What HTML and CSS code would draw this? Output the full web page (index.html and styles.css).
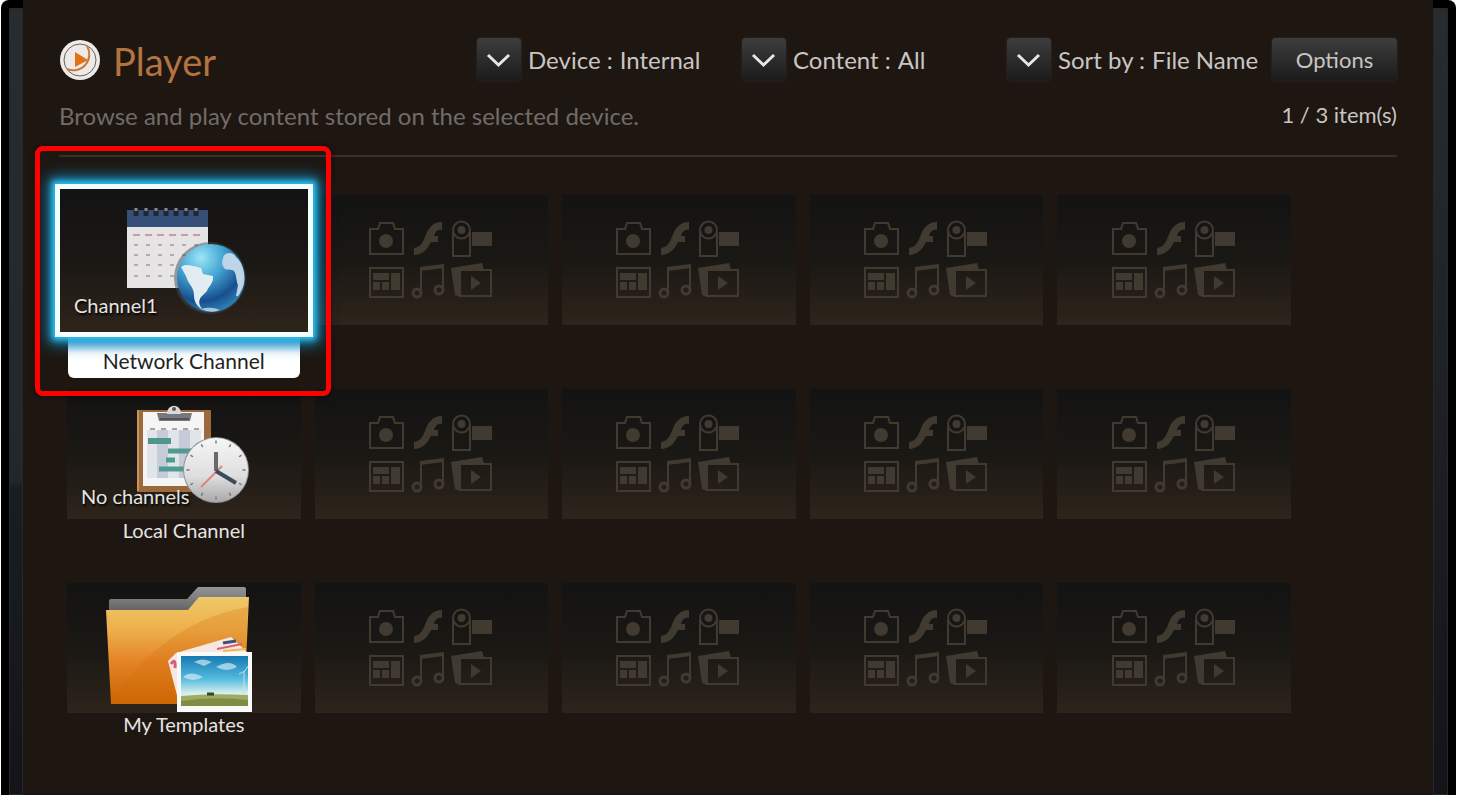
FILE: index.html
```html
<!DOCTYPE html>
<html lang="en">
<head>
    <meta charset="UTF-8">
    <meta name="viewport" content="width=device-width, initial-scale=1.0">
    <title>Player</title>
    <link rel="stylesheet" href="styles.css">
</head>
<body>
    <!-- Shared drawings -->
    <svg class="symbols" aria-hidden="true">
        <symbol id="chevron" viewBox="0 0 44 43">
            <path d="M11 17L21.5 27L32 17" fill="none" stroke="#e6e6e6" stroke-width="3"/>
        </symbol>
        <symbol id="media" viewBox="1 0 233 130">
            <g fill="none" stroke="#403a31" stroke-width="2">
                <path d="M56 34H64L66 28H79L81 34H89V59H56Z"/>
                <path d="M139 37V61H156V37"/>
                <circle cx="147.5" cy="35" r="8.5"/>
                <rect x="56" y="73" width="33" height="29"/>
                <path d="M107 98V74L129 71V95"/>
                <circle cx="103" cy="98" r="4" stroke-width="3"/>
                <circle cx="125" cy="95" r="4" stroke-width="3"/>
                <rect x="146" y="75" width="31" height="26"/>
            </g>
            <g fill="#403a31">
                <circle cx="72" cy="46" r="7"/>
                <path d="M128 27V35C124 34 121 37 120 41H124V47H117C113 55 108 60 100 60V53C106 52 108 49 111 42C114 33 119 27 128 27Z"/>
                <circle cx="147.5" cy="35" r="4"/>
                <rect x="158" y="37" width="20" height="14"/>
                <path d="M59 78H75V85H59ZM77 78H86V95H77ZM59 87H66V95H59ZM68 87H75V95H68Z"/>
                <path d="M106 72L130 69V73L106 76Z"/>
                <path d="M137 73L168 68L170 75H146V102L141 100Z"/>
                <path d="M157 81V95L167 88Z"/>
            </g>
        </symbol>
    </svg>

    <div class="screen">
        <div class="rail"></div>
        <main class="panel">
            <header class="header">
                <div class="title">
                    <svg class="title-icon" viewBox="0 0 42 42" aria-hidden="true">
                        <circle cx="21" cy="21" r="20" fill="#eeeae7"/>
                        <circle cx="21" cy="21" r="16" fill="none" stroke="#6b625c" stroke-width="1"/>
                        <path d="M28 7A16 16 0 0 1 8 30" fill="none" stroke="#c87a3c" stroke-width="2"/>
                        <path d="M16 13V28L29 21Z" fill="#df7417"/>
                    </svg>
                    <h1>Player</h1>
                </div>
                <div class="filters">
                    <label class="filter">
                        <svg class="filter-icon" aria-hidden="true"><use href="#chevron"/></svg>
                        <span>Device :</span>
                        <select>
                            <option>Internal</option>
                            <option>USB</option>
                        </select>
                    </label>
                    <label class="filter">
                        <svg class="filter-icon" aria-hidden="true"><use href="#chevron"/></svg>
                        <span>Content :</span>
                        <select>
                            <option>All</option>
                            <option>Templates</option>
                        </select>
                    </label>
                    <label class="filter">
                        <svg class="filter-icon" aria-hidden="true"><use href="#chevron"/></svg>
                        <span>Sort by :</span>
                        <select>
                            <option>File Name</option>
                            <option>Date</option>
                        </select>
                    </label>
                    <button class="options" type="button">Options</button>
                </div>
            </header>

            <div class="info">
                <p class="description">Browse and play content stored on the selected device.</p>
                <p class="count">1 / 3 item(s)</p>
            </div>

            <ul class="grid">
                <li class="item selected">
                    <button class="tile" type="button" aria-labelledby="network">
                        <svg class="art" viewBox="0 0 233 130" aria-hidden="true">
                            <defs>
                                <radialGradient id="sea" cx="0.35" cy="0.2" r="0.85">
                                    <stop offset="0" stop-color="#9be6f7"/>
                                    <stop offset="0.4" stop-color="#42a3d3"/>
                                    <stop offset="0.75" stop-color="#174f8d"/>
                                    <stop offset="1" stop-color="#3186bd"/>
                                </radialGradient>
                            </defs>
                            <rect x="60" y="14" width="81" height="78" fill="#e6e4e4"/>
                            <rect x="60" y="14" width="81" height="17" fill="#364f78"/>
                            <path d="M69 12V20M79 12V20M89 12V20M99 12V20M109 12V20M119 12V20M129 12V20" stroke="#202634" stroke-width="5"/>
                            <path d="M69 12V15M79 12V15M89 12V15M99 12V15M109 12V15M119 12V15M129 12V15" stroke="#83868c" stroke-width="3"/>
                            <path d="M66 39H135" stroke="#cf9a99" stroke-width="2" stroke-dasharray="7 5"/>
                            <path d="M67 49H135M67 59H135M67 69H135M67 80H135" stroke="#b0adae" stroke-width="2" stroke-dasharray="4 8"/>
                            <circle cx="143" cy="82" r="36" fill="#3d4a55" opacity="0.5"/>
                            <circle cx="144" cy="82" r="34" fill="url(#sea)"/>
                            <path d="M114 71C119 67 124 70 127 70L134 72L136 78L146 80C147 87 141 91 140 95L134 101C131 105 132 110 136 114C129 110 127 105 127 99C127 91 121 88 119 80Z" fill="#e2edf1"/>
                            <path d="M156 62C157 56 166 55 169 61C178 68 180 86 174 95C172 100 170 101 169 100L171 89C169 85 170 80 167 75C163 72 157 77 155 67Z" fill="#bdd5e6"/>
                            <path d="M134 113Q144 110 153 114Q144 118 134 113Z" fill="#a9c8dd"/>
                        </svg>
                        <span class="status">Channel1</span>
                    </button>
                    <p class="name" id="network">Network Channel</p>
                    <div class="callout"></div>
                </li>
                <li class="item"><div class="tile"><svg class="art" aria-hidden="true"><use href="#media"/></svg></div></li>
                <li class="item"><div class="tile"><svg class="art" aria-hidden="true"><use href="#media"/></svg></div></li>
                <li class="item"><div class="tile"><svg class="art" aria-hidden="true"><use href="#media"/></svg></div></li>
                <li class="item"><div class="tile"><svg class="art" aria-hidden="true"><use href="#media"/></svg></div></li>

                <li class="item">
                    <button class="tile" type="button" aria-labelledby="local">
                        <svg class="art" viewBox="0 0 233 130" aria-hidden="true">
                            <defs>
                                <linearGradient id="dial" x1="0" y1="0" x2="0" y2="1">
                                    <stop offset="0" stop-color="#f6f6f6"/>
                                    <stop offset="0.6" stop-color="#dedede"/>
                                    <stop offset="1" stop-color="#a9a9a9"/>
                                </linearGradient>
                            </defs>
                            <rect x="70" y="21" width="74" height="82" rx="1" fill="#9b6a3c"/>
                            <path d="M71 21V102" stroke="#c9955d" stroke-width="2"/>
                            <rect x="76" y="23" width="61" height="74" fill="#f5f5f5"/>
                            <rect x="80" y="41" width="54" height="48" fill="#e1e4e9"/>
                            <path d="M90 41H101V89H90ZM112 41H123V89H112Z" fill="#c6cbd9"/>
                            <path d="M83 40H132" stroke="#a4a4a4" stroke-width="2" stroke-dasharray="5 6"/>
                            <path d="M81 52H104" stroke="#4f968b" stroke-width="6"/>
                            <path d="M101 62H126M99 71H108M92 80H120" stroke="#4f9b8f" stroke-width="5"/>
                            <path d="M90 24H125L123 32H92Z" fill="#77787a"/>
                            <path d="M93 30H122" stroke="#525355" stroke-width="2"/>
                            <path d="M100 25C100 14 114 14 114 25Z" fill="#d9d9d9"/>
                            <circle cx="107" cy="20" r="2" fill="#555"/>
                            <circle cx="149" cy="81" r="33" fill="#929292"/>
                            <circle cx="149" cy="81" r="32" fill="url(#dial)"/>
                            <circle cx="149" cy="81" r="28" fill="none" stroke="#75797d" stroke-width="3" pathLength="120" stroke-dasharray="1 9" stroke-dashoffset="0.5"/>
                            <path d="M155 77L134 98" stroke="#d98580" stroke-width="2"/>
                            <path d="M149 82V63" stroke="#66696e" stroke-width="4"/>
                            <path d="M149 82L169 94" stroke="#3d4a5c" stroke-width="4"/>
                        </svg>
                        <span class="status">No channels</span>
                    </button>
                    <p class="name" id="local">Local Channel</p>
                </li>
                <li class="item"><div class="tile"><svg class="art" aria-hidden="true"><use href="#media"/></svg></div></li>
                <li class="item"><div class="tile"><svg class="art" aria-hidden="true"><use href="#media"/></svg></div></li>
                <li class="item"><div class="tile"><svg class="art" aria-hidden="true"><use href="#media"/></svg></div></li>
                <li class="item"><div class="tile"><svg class="art" aria-hidden="true"><use href="#media"/></svg></div></li>

                <li class="item">
                    <button class="tile" type="button" aria-labelledby="templates">
                        <svg class="art" viewBox="0 0 233 130" aria-hidden="true">
                            <defs>
                                <linearGradient id="folder" x1="0" y1="0" x2="0" y2="1">
                                    <stop offset="0" stop-color="#efc869"/>
                                    <stop offset="0.3" stop-color="#eeb04c"/>
                                    <stop offset="0.6" stop-color="#e48427"/>
                                    <stop offset="1" stop-color="#c96500"/>
                                </linearGradient>
                                <linearGradient id="sky" x1="0" y1="0" x2="0" y2="1">
                                    <stop offset="0" stop-color="#1679b0"/>
                                    <stop offset="0.45" stop-color="#52b9df"/>
                                    <stop offset="0.75" stop-color="#d9f0ed"/>
                                </linearGradient>
                                <linearGradient id="back" x1="0" y1="0" x2="0" y2="1">
                                    <stop offset="0" stop-color="#949494"/>
                                    <stop offset="1" stop-color="#555"/>
                                </linearGradient>
                            </defs>
                            <path d="M42 18Q42 16 44 16H120L131 4H177Q179 4 179 6V35H42Z" fill="url(#back)"/>
                            <path d="M39 27H121L132 14H182L177 121H44Z" fill="url(#folder)"/>
                            <path d="M44 121C65 81 115 35 181 24L177 121Z" fill="#d56d08" opacity="0.25"/>
                            <path d="M101 78L109 70L164 54L180 69L170 110L112 120Z" fill="#f5e8e4"/>
                            <path d="M104 81Q109 74 108 85" fill="none" stroke="#d65d79" stroke-width="3"/>
                            <path d="M150 66L175 61" stroke="#d65d79" stroke-width="2"/>
                            <path d="M156 60L169 58" stroke="#444f71" stroke-width="3"/>
                            <path d="M156 68L179 66" stroke="#e5bd4b" stroke-width="2"/>
                            <rect x="110" y="69" width="75" height="60" fill="#f9f9f9"/>
                            <rect x="114" y="73" width="67" height="50" fill="url(#sky)"/>
                            <path d="M114 113Q145 110 181 112V123H114Z" fill="#a0aa62"/>
                            <path d="M114 118Q148 113 181 117V123H114Z" fill="#7f8c43"/>
                            <path d="M116 94Q123 87 136 94Q126 100 116 94ZM127 79Q135 74 145 79L137 83ZM149 84Q163 76 170 84Q160 90 149 84Z" fill="#d9eff5" opacity="0.65"/>
                            <path d="M177 88V111M172 91L178 88L181 83" fill="none" stroke="#c9dfdf" stroke-width="1"/>
                            <path d="M140 111H147" stroke="#34462c" stroke-width="3"/>
                        </svg>
                    </button>
                    <p class="name" id="templates">My Templates</p>
                </li>
                <li class="item"><div class="tile"><svg class="art" aria-hidden="true"><use href="#media"/></svg></div></li>
                <li class="item"><div class="tile"><svg class="art" aria-hidden="true"><use href="#media"/></svg></div></li>
                <li class="item"><div class="tile"><svg class="art" aria-hidden="true"><use href="#media"/></svg></div></li>
                <li class="item"><div class="tile"><svg class="art" aria-hidden="true"><use href="#media"/></svg></div></li>
            </ul>
        </main>
        <div class="rail rail-right"></div>
    </div>
</body>
</html>
```
FILE: styles.css
```css
* {
    box-sizing: border-box;
    margin: 0;
    padding: 0;
}

body {
    background: #fff;
    color: #c9c5c2;
    font-family: Lato, sans-serif;
}

.symbols {
    display: none;
}

.screen {
    display: flex;
    min-height: calc(100vh - 10px);
    margin: 0 5px 10px 1px;
    padding: 0 8px;
    background: #000;
    border-radius: 8px 8px 0 0;
}

.rail {
    width: 14px;
    margin-top: 8px;
    background: linear-gradient(#282c31, #23262b 60%, #191d21 61%, #131418);
    box-shadow: inset 0 0 0 1px #25282b;
}

.rail-right {
    width: 15px;
    background: linear-gradient(#282c31, #131418);
}

.panel {
    flex: 1;
    padding: 38px 36px 0;
    background: #1e1611;
    border-bottom: 2px solid #15131a;
}

.header {
    display: flex;
    justify-content: space-between;
    align-items: center;
}

.title {
    display: flex;
    align-items: center;
    gap: 12px;
}

.title-icon {
    width: 42px;
    height: 42px;
}

h1 {
    padding-top: 3px;
    color: #b4733f;
    font-size: 38px;
    font-weight: 400;
    line-height: 40px;
}

.filters {
    display: flex;
    gap: 10px;
}

.filter {
    display: flex;
    align-items: center;
    gap: 7px;
    min-width: 255px;
    font-size: 24px;
    white-space: nowrap;
}

.filter-icon {
    flex: none;
    width: 44px;
    height: 43px;
    background: linear-gradient(#3d3d3d, #1b1b1b);
    border-radius: 4px;
    box-shadow: 0 0 2px #3a3836;
}

.filter select {
    appearance: none;
    field-sizing: content;
    background: none;
    border: none;
    color: inherit;
    font: inherit;
    cursor: pointer;
}

.options {
    width: 125px;
    height: 43px;
    background: linear-gradient(#3d3d3d, #1b1b1b);
    border: none;
    border-radius: 4px;
    box-shadow: 0 0 2px #3a3836;
    color: #c9c5c2;
    font-family: inherit;
    font-size: 22px;
    cursor: pointer;
}

.info {
    display: flex;
    justify-content: space-between;
    height: 76px;
    padding-top: 20px;
    border-bottom: 2px solid #35302c;
}

.description {
    color: #716c68;
    font-size: 24px;
    line-height: 30px;
}

.count {
    font-size: 22px;
    line-height: 28px;
}

.grid {
    display: grid;
    grid-template-columns: repeat(5, 1fr);
    grid-auto-rows: 194px;
    column-gap: 14px;
    padding: 38px 106px 0 8px;
    list-style: none;
}

.item {
    position: relative;
}

.tile {
    position: relative;
    display: flex;
    align-items: center;
    justify-content: center;
    width: 100%;
    height: 130px;
    background: linear-gradient(#131313, #1a1814 50%, #2e241b);
    border: none;
    color: #e6e4e2;
    font-family: inherit;
}

.art {
    flex: none;
    width: 233px;
    height: 130px;
}

.status {
    position: absolute;
    left: 14px;
    bottom: 12px;
    font-size: 20px;
    line-height: 22px;
    text-shadow: 1px 2px 2px #000;
}

.name {
    color: #e6e4e2;
    font-size: 20px;
    line-height: 22px;
    text-align: center;
}

.selected .tile {
    z-index: 1;
    width: calc(100% + 24px);
    height: 153px;
    margin: -11px -12px 0;
    border: 5px solid #f1ffff;
    box-shadow: 0 0 6px 3px #31c6f5, 0 0 14px 7px #1280b4;
}

.selected .status {
    bottom: 16px;
}

.selected .name {
    margin: 0 1px;
    padding: 13px 0 6px;
    background: linear-gradient(#6cbdf5, #fff 16px);
    border-radius: 0 0 6px 6px;
    color: #222;
    font-size: 21px;
}

.callout {
    position: absolute;
    z-index: 2;
    top: -49px;
    left: -32px;
    right: -30px;
    height: 250px;
    border: 5px solid #f00;
    border-radius: 8px;
    box-shadow: 0 0 6px rgba(0, 0, 0, 0.5);
    pointer-events: none;
}
```
